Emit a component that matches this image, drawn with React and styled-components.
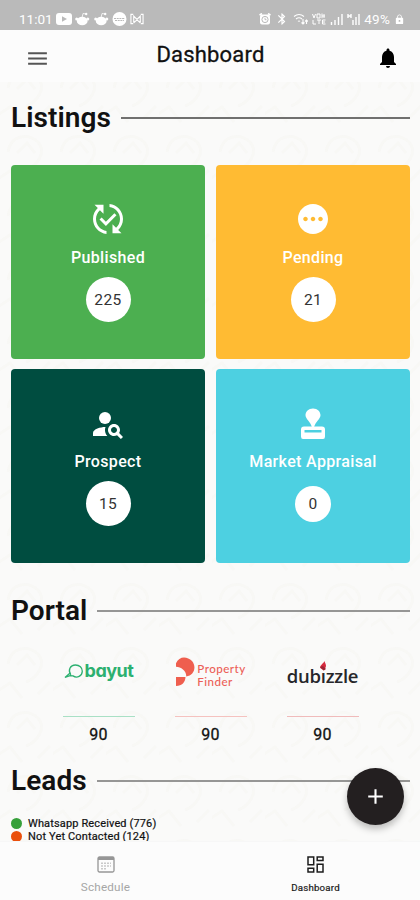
import React from 'react';
import styled, { createGlobalStyle } from 'styled-components';
import {
	MdAdd,
	MdBluetooth,
	MdLock,
	MdMenu,
	MdNotifications,
	MdPending,
	MdPersonSearch,
	MdPublishedWithChanges,
} from 'react-icons/md';

const GlobalStyle = createGlobalStyle`
	* {
		box-sizing: border-box;
	}

	body {
		margin: 0;
		background: #fafaf9;
		font-family: Roboto, 'Liberation Sans', sans-serif;
		color: #111;
	}
`;

const Layout = styled.main`
	height: 900px;
	width: 420px;
	display: flex;
	flex-direction: column;
	position: relative;
	overflow: hidden;
	isolation: isolate;
`;

const Texture = styled.svg`
	position: absolute;
	inset: 0;
	z-index: -1;
`;

const StatusBar = styled.div`
	height: 30px;
	padding: 8px 15px 0 19px;
	display: flex;
	justify-content: space-between;
	align-items: center;
	background: #bababa;
	color: #fff;
	flex-shrink: 0;
`;

const StatusGroup = styled.div`
	display: flex;
	align-items: center;
	gap: ${(props) => props.$gap};

	svg {
		display: block;
	}
`;

const StatusText = styled.span`
	font-size: 13.5px;
	line-height: 16px;
	letter-spacing: ${(props) => props.$spacing || '0'};
`;

const AppBar = styled.header`
	height: 52px;
	padding: 0 20px 0 25px;
	display: grid;
	grid-template-columns: 24px 1fr 24px;
	align-items: center;
	background: #fcfcfc;
	flex-shrink: 0;

	svg {
		display: block;
		margin-top: 4px;
	}
`;

const Title = styled.h1`
	margin: 0 0 3px;
	padding-right: 4px;
	text-align: center;
	font-size: 22px;
	font-weight: 400;
	letter-spacing: 0.2px;
	line-height: 28px;
	-webkit-text-stroke: 0.3px #111;
`;

const Content = styled.div`
	flex: 1;
	min-height: 0;
	overflow: hidden;
	padding: 19px 10px 0 11px;
`;

const SectionTitle = styled.div`
	display: flex;
	align-items: center;
	gap: 10px;
	height: 34px;

	h2 {
		margin: 0;
		font-size: 28px;
		font-weight: 600;
		line-height: 34px;
		letter-spacing: 0.05px;
	}

	&::after {
		content: '';
		flex: 1;
		height: 2px;
		background: ${(props) => props.$line || '#70706f'};
	}
`;

const Cards = styled.section`
	display: grid;
	grid-template-columns: 194px 194px;
	grid-auto-rows: 194px;
	gap: 10.5px 11px;
	margin: 29.5px 0 31px;
`;

const Card = styled.article`
	display: flex;
	flex-direction: column;
	align-items: center;
	padding-top: 36.5px;
	border-radius: 4px;
	background: ${(props) => props.$color};
	color: #fff;
`;

const CardLabel = styled.h3`
	margin: ${(props) => props.$gap} 0 0;
	font-size: 16px;
	font-weight: 500;
	line-height: 20px;
	letter-spacing: 0.35px;
`;

const CountSlot = styled.div`
	height: 45px;
	margin-top: 9px;
	display: flex;
	align-items: center;
`;

const Count = styled.div`
	width: ${(props) => props.$size}px;
	height: ${(props) => props.$size}px;
	border-radius: 50%;
	display: flex;
	align-items: center;
	justify-content: center;
	background: #fff;
	color: #333;
	font-size: 15.5px;
	letter-spacing: 0.4px;
`;

const Portals = styled.section`
	display: flex;
	justify-content: center;
	gap: 40px;
	margin: 26px 0 19px;
`;

const Portal = styled.div`
	width: 72px;
	display: flex;
	flex-direction: column;
	align-items: center;
`;

const Logo = styled.div`
	height: 36px;
	display: flex;
	align-items: center;
	justify-content: center;
	white-space: nowrap;

	svg {
		flex-shrink: 0;
	}
`;

const PortalCount = styled.div`
	width: 100%;
	margin-top: 26px;
	padding-top: 8px;
	border-top: 1px solid ${(props) => props.$line};
	text-align: center;
	font-size: 16px;
	line-height: 20px;
	letter-spacing: 0.2px;
	-webkit-text-stroke: 0.3px #111;
`;

const BayutName = styled.span`
	margin-top: -2px;
	font-family: Inter, 'Noto Sans', sans-serif;
	font-feature-settings: 'cv11' 1;
	font-size: 18px;
	font-weight: 700;
	line-height: 24px;
	letter-spacing: -0.5px;
	color: #2cb070;
`;

const FinderName = styled.span`
	display: flex;
	flex-direction: column;
	margin: 5px 0 0 2px;
	font-family: Lato, sans-serif;
	font-size: 11.6px;
	font-weight: 500;
	line-height: 13px;
	letter-spacing: 0.45px;
	color: #ec5f57;
`;

const DubizzleName = styled.span`
	position: relative;
	top: 4px;
	font-family: 'Open Sans', sans-serif;
	font-size: 18.5px;
	font-weight: 600;
	line-height: 24px;
	letter-spacing: -0.25px;
	color: #26262a;

	svg {
		position: absolute;
		left: 32px;
		top: -3px;
	}
`;

const Leads = styled.ul`
	list-style: none;
	margin: 19px 0 0;
	padding: 0;
`;

const Lead = styled.li`
	display: flex;
	align-items: center;
	gap: 6px;
	height: 13px;
	font-size: 11px;
	line-height: 13px;
	letter-spacing: 0.14px;
	-webkit-text-stroke: 0.2px #111;

	&::before {
		content: '';
		width: 11px;
		height: 11px;
		border-radius: 50%;
		background: ${(props) => props.$color};
	}
`;

const BottomNav = styled.nav`
	height: 59px;
	display: grid;
	grid-template-columns: 1fr 1fr;
	background: #fcfcfc;
	border-top: 1px solid #f7f7f7;
	flex-shrink: 0;
`;

const NavItem = styled.a`
	display: flex;
	flex-direction: column;
	align-items: center;
	padding: 14px 0 0 1px;
	color: ${(props) => (props.$active ? '#1c1c1c' : '#a6a6a6')};
	font-size: ${(props) => (props.$active ? '9.7px' : '11.7px')};
	letter-spacing: 0.2px;

	span {
		line-height: 14px;
		margin-top: ${(props) => (props.$active ? '8px' : '7px')};
		-webkit-text-stroke: ${(props) => (props.$active ? '0.2px' : '0')};
	}
`;

const Fab = styled.button`
	position: absolute;
	right: 16px;
	bottom: 75px;
	width: 57px;
	height: 57px;
	padding: 0;
	border: 0;
	border-radius: 50%;
	display: flex;
	align-items: center;
	justify-content: center;
	background: #231f20;
	color: #fff;
	box-shadow: 0 4px 7px rgba(0, 0, 0, 0.25);
`;

const BackgroundTexture = () => (
	<Texture width="420" height="900" aria-hidden="true">
		<defs>
			<pattern id="leaves" width="53" height="64" patternUnits="userSpaceOnUse">
				<g fill="none" stroke="#f6f5f2" strokeWidth="3" opacity=".5">
					<path d="M8 24C10 8 27 4 38 14C47 24 37 38 26 42" />
					<path d="M17 25L27 15L35 25M-4 52L10 43L22 58M38 54L50 42" />
				</g>
			</pattern>
		</defs>
		<rect width="420" height="900" fill="url(#leaves)" />
	</Texture>
);

const VideoIcon = () => (
	<svg width="16" height="12" viewBox="0 0 16 12">
		<rect width="16" height="12" rx="3" fill="#fff" />
		<path d="M6 3.3L11 6L6 8.7Z" fill="#bababa" />
	</svg>
);

const RedditIcon = () => (
	<svg width="15" height="14" viewBox="0 0 15 14" fill="#fff">
		<ellipse cx="7.2" cy="9" rx="5.4" ry="4.3" />
		<circle cx="1.7" cy="7" r="1.5" />
		<circle cx="12.8" cy="7" r="1.5" />
		<circle cx="11.2" cy="2" r="1.2" />
		<path d="M7.2 5L8 1.5L11 2" fill="none" stroke="#fff" strokeWidth=".8" />
	</svg>
);

const BadgeIcon = () => (
	<svg width="15" height="14" viewBox="0 0 15 14">
		<circle cx="7.5" cy="7" r="7" fill="#fff" />
		<path d="M2 6.5H13M3 8.5H12" stroke="#bababa" strokeWidth="1" strokeDasharray="2 .7" />
	</svg>
);

const CastIcon = () => (
	<svg width="14" height="12" viewBox="0 0 15 12" fill="none" stroke="#fff" strokeWidth="1.2">
		<path d="M3.5 1H1V11H3.5M11.5 1H14V11H11.5M4 10V3L7.5 6.5L11 3V10M4 10L7.5 7L11 10" />
	</svg>
);

const AlarmIcon = () => (
	<svg width="12" height="12" viewBox="0 0 12 12">
		<path d="M.5 2L3 .5M11.5 2L9 .5" stroke="#fff" strokeWidth="1.5" />
		<rect x="1" y="1.5" width="10" height="10" rx="2" fill="#fff" />
		<circle cx="6" cy="6.5" r="3.1" fill="none" stroke="#bababa" />
		<path d="M6 4.8V6.7H7.5" fill="none" stroke="#bababa" strokeWidth=".9" />
	</svg>
);

const WifiIcon = () => (
	<svg width="15" height="12" viewBox="0 0 15 12" fill="none" stroke="#fff" strokeWidth="1.1">
		<path d="M1 3.5Q6 -.5 11 3.5M3 6Q6 3.5 9 6M5 8.4Q6 7.5 7 8.4M10 6V11M8.5 9.5L10 11L11.5 9.5M13.5 11V7M12 8.5L13.5 7L15 8.5" />
	</svg>
);

const LteIcon = () => (
	<svg width="14" height="12" viewBox="0 0 14 12" fill="none" stroke="#fff" strokeWidth="1">
		<path d="M.5 1L2 5L3.5 1M5 1H8V5H5ZM10 .5V5.2M10 3H13M12 1V5M1 7V11H4M5 7H9M7 7V11M13.5 7H10.5V11H13.5M10.5 9H13" />
	</svg>
);

const SignalIcon = ({ label }) => (
	<svg width="13" height="12" viewBox="0 0 13 12" fill="none" stroke="#fff" strokeWidth="1.4">
		{label ? (
			<path d="M1 1V5M1 3H4M4 1V5M6 12V7M9 12V4M12 12V1" />
		) : (
			<path d="M1.5 12V9M5 12V7M8.5 12V4M12 12V1" />
		)}
	</svg>
);

const AppraisalIcon = () => (
	<svg width="36" height="36" viewBox="0 0 36 36" fill="#fff">
		<path d="M18 2.5C13.5 2.5 10.5 5.7 10.5 9.2C10.5 12.8 15.5 15.5 17.1 21.5H18.9C20.5 15.5 25.5 12.8 25.5 9.2C25.5 5.7 22.5 2.5 18 2.5Z" />
		<path
			fillRule="evenodd"
			d="M9 20.5H27Q30 20.5 30 23.5V30.5Q30 33 28 33H8Q6 33 6 30.5V23.5Q6 20.5 9 20.5ZM9.5 24V26.5H26.5V24Z"
		/>
	</svg>
);

const BayutMark = () => (
	<svg width="21" height="18" viewBox="0 0 21 18" fill="none" stroke="#2cb070" strokeWidth="1.3">
		<path d="M6.8 11.8C3.7 7.5 6 2 11.5 2C15.5 2 18.3 4.8 18.3 8.2C18.2 13 13 15.6 9 12.9L6 12.7L1 14.5L5.8 10.2" />
	</svg>
);

const FinderMark = () => (
	<svg width="20" height="30" viewBox="0 0 20 30" fill="#ef5e4e">
		<path d="M1 6.2C4 -1 12 -1 17 4C22 10 19 18.5 11.2 19.5C11.7 14.2 6.2 9.8 1 9.8Z" />
		<path d="M1 20H10.5C10.4 25 7 29 1 29Z" />
	</svg>
);

const Flame = () => (
	<svg width="9" height="12" viewBox="0 0 9 12">
		<path d="M5.8 0C5.5 2 7.7 3.5 6.8 6L4.8 9.5L1.2 7C.7 4.5 3.8 3 5.8 0Z" fill="#d62b3f" />
		<path d="M1 6L4 5L7 8L4.8 9.5Z" fill="#9d2434" />
	</svg>
);

const ScheduleIcon = () => (
	<svg width="18" height="17" viewBox="0 0 18 17" fill="none" stroke="#969696">
		<rect x="1" y="1" width="16" height="15" rx="1.5" strokeWidth="1.3" />
		<path d="M1 2.5H17" strokeWidth="3" />
		<path d="M4 7.3H14M4 10H14M4 12.7H10" strokeWidth="1.5" strokeDasharray="2 1" opacity=".5" />
	</svg>
);

const DashboardIcon = () => (
	<svg width="17" height="17" viewBox="0 0 17 17" fill="none" stroke="#1c1c1c" strokeWidth="1.5">
		<path d="M1 1H6.7V8.7H1ZM10.2 1H16V4.5H10.2ZM1 12.2H6.7V16H1ZM10.2 8.3H16V16H10.2Z" />
	</svg>
);

const cards = [
	{ label: 'Published', count: 225, color: '#4caf50', gap: '11px', icon: <MdPublishedWithChanges size={36} /> },
	{ label: 'Pending', count: 21, color: '#ffbb33', gap: '11px', icon: <MdPending size={36} /> },
	{ label: 'Prospect', count: 15, color: '#004d40', gap: '10.5px', icon: <MdPersonSearch size={36} /> },
	{ label: 'Market Appraisal', count: 0, color: '#4dd0e1', gap: '10.5px', icon: <AppraisalIcon /> },
];

const App = () => {
	return (
		<>
			<GlobalStyle />
			<Layout>
				<BackgroundTexture />
				<StatusBar>
					<StatusGroup $gap="3.3px">
						<StatusText>11:01</StatusText>
						<VideoIcon />
						<RedditIcon />
						<RedditIcon />
						<BadgeIcon />
						<CastIcon />
					</StatusGroup>
					<StatusGroup $gap="4px">
						<AlarmIcon />
						<MdBluetooth size={14} />
						<WifiIcon />
						<LteIcon />
						<SignalIcon />
						<SignalIcon label />
						<StatusText $spacing="0.2px">49%</StatusText>
						<MdLock size={11} />
					</StatusGroup>
				</StatusBar>
				<AppBar>
					<MdMenu size={25} color="#555" />
					<Title>Dashboard</Title>
					<MdNotifications size={24} color="#000" />
				</AppBar>
				<Content>
					<SectionTitle>
						<h2>Listings</h2>
					</SectionTitle>
					<Cards>
						{cards.map((card) => (
							<Card key={card.label} $color={card.color}>
								{card.icon}
								<CardLabel $gap={card.gap}>{card.label}</CardLabel>
								<CountSlot>
									<Count $size={card.count ? 45 : 36}>{card.count}</Count>
								</CountSlot>
							</Card>
						))}
					</Cards>
					<SectionTitle $line="#969695">
						<h2>Portal</h2>
					</SectionTitle>
					<Portals>
						<Portal>
							<Logo>
								<BayutMark />
								<BayutName>bayut</BayutName>
							</Logo>
							<PortalCount $line="#a9e0c5">90</PortalCount>
						</Portal>
						<Portal>
							<Logo>
								<FinderMark />
								<FinderName>
									<span>Property</span>
									<span>Finder</span>
								</FinderName>
							</Logo>
							<PortalCount $line="#f5c2bf">90</PortalCount>
						</Portal>
						<Portal>
							<Logo>
								<DubizzleName>
									dubızzle
									<Flame />
								</DubizzleName>
							</Logo>
							<PortalCount $line="#f0bbbb">90</PortalCount>
						</Portal>
					</Portals>
					<SectionTitle $line="#969695">
						<h2>Leads</h2>
					</SectionTitle>
					<Leads>
						<Lead $color="#36a03a">Whatsapp Received (776)</Lead>
						<Lead $color="#ea4f0c">Not Yet Contacted (124)</Lead>
					</Leads>
				</Content>
				<BottomNav>
					<NavItem>
						<ScheduleIcon />
						<span>Schedule</span>
					</NavItem>
					<NavItem $active>
						<DashboardIcon />
						<span>Dashboard</span>
					</NavItem>
				</BottomNav>
				<Fab aria-label="Add">
					<MdAdd size={25} />
				</Fab>
			</Layout>
		</>
	);
};

export default App;
